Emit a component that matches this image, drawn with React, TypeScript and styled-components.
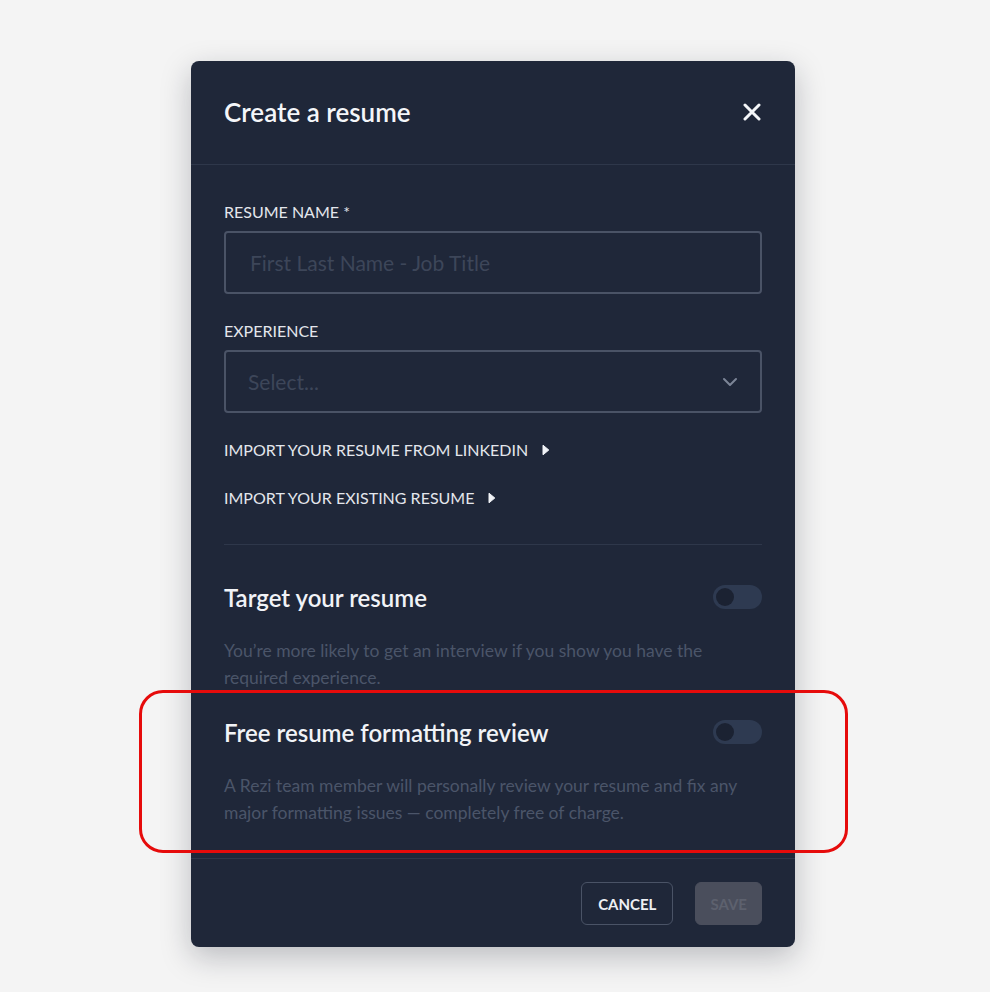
import React from 'react';
import styled, { createGlobalStyle } from 'styled-components';

const GlobalStyle = createGlobalStyle`
  html, body {
    margin: 0;
    padding: 0;
    background: #f4f4f4;
    font-family: Lato, "Open Sans", "Liberation Sans", sans-serif;
  }
  * {
    box-sizing: border-box;
  }
`;

const Page = styled.main`
  min-height: 992px;
  display: flex;
  justify-content: center;
  align-items: flex-start;
  padding: 61px 4px 0 0;
`;

const Modal = styled.div`
  position: relative;
  width: 604px;
  background: #1f2739;
  border-radius: 8px;
  box-shadow: 0 10px 30px rgba(20, 25, 40, 0.25);
  color: #e6e9ef;
`;

const Header = styled.header`
  height: 104px;
  display: flex;
  align-items: center;
  justify-content: space-between;
  padding: 0 33px 1px;
  border-bottom: 1px solid #2e374a;
`;

const Title = styled.h1`
  margin: 0;
  font-size: 26px;
  font-weight: 600;
  color: #f4f6f9;
`;

const CloseButton = styled.button`
  background: none;
  border: none;
  padding: 0;
  width: 20px;
  height: 20px;
  display: flex;
  align-items: center;
  justify-content: center;
  cursor: pointer;
`;

const Body = styled.div`
  padding: 37px 33px 0;
  display: flex;
  flex-direction: column;
`;

const Label = styled.label`
  display: block;
  font-size: 16px;
  line-height: 20px;
  text-transform: uppercase;
  color: #e3e6ec;
  margin-bottom: 9px;
`;

const Field = styled.div<{ $gap?: number }>`
  margin-bottom: ${(p) => p.$gap ?? 27}px;
`;

const InputBox = styled.div`
  position: relative;
  height: 63px;
  border: 2px solid #4a5366;
  border-radius: 4px;
  display: flex;
  align-items: center;
  padding: 0 22px;
`;

const TextInput = styled.input`
  width: 100%;
  background: transparent;
  border: none;
  outline: none;
  font-family: inherit;
  font-size: 21px;
  color: #e6e9ef;
  &::placeholder {
    color: #3d4659;
  }
`;

const SelectValue = styled.span`
  flex: 1;
  font-size: 21px;
  color: #3d4659;
`;

const LinkRow = styled.a<{ $last?: boolean }>`
  display: flex;
  align-items: center;
  gap: 14px;
  font-size: 16px;
  line-height: 20px;
  color: #e3e6ec;
  text-transform: uppercase;
  text-decoration: none;
  cursor: pointer;
  margin-bottom: ${(p) => (p.$last ? 36 : 28)}px;
`;

const Divider = styled.hr`
  margin: 0 0 38px;
  border: none;
  border-top: 1px solid #2e374a;
`;

const Section = styled.section`
  margin-bottom: 27px;
`;

const SectionHead = styled.div`
  display: flex;
  align-items: center;
  justify-content: space-between;
  height: 28px;
  margin-bottom: 26px;
`;

const SectionTitle = styled.h2`
  margin: 0;
  font-size: 24px;
  font-weight: 600;
  color: #f1f3f7;
`;

const Description = styled.p`
  margin: 0;
  font-size: 17.5px;
  line-height: 27px;
  color: #4b5569;
  max-width: 525px;
`;

const Toggle = styled.button`
  position: relative;
  width: 49px;
  height: 24px;
  border-radius: 12px;
  border: none;
  padding: 0;
  background: #2e3a51;
  cursor: pointer;
  &::after {
    content: '';
    position: absolute;
    left: 3px;
    top: 3px;
    width: 18px;
    height: 18px;
    border-radius: 50%;
    background: #1b2232;
  }
`;

const Footer = styled.footer`
  margin-top: 5px;
  border-top: 1px solid #2e374a;
  padding: 23px 33px 22px;
  display: flex;
  justify-content: flex-end;
  gap: 22px;
`;

const Button = styled.button<{ $disabled?: boolean }>`
  height: 43px;
  padding: 0 ${(p) => (p.$disabled ? 14 : 16)}px;
  border-radius: 6px;
  font-family: inherit;
  font-size: 15px;
  font-weight: 700;
  text-transform: uppercase;
  border: 1.5px solid ${(p) => (p.$disabled ? '#4a4e5c' : '#4a5366')};
  background: ${(p) => (p.$disabled ? '#4a4e5c' : 'transparent')};
  color: ${(p) => (p.$disabled ? '#5d616e' : '#eef0f4')};
  cursor: ${(p) => (p.$disabled ? 'default' : 'pointer')};
`;

const Highlight = styled.div`
  position: absolute;
  left: -52px;
  top: 629px;
  width: 709px;
  height: 163px;
  border: 3px solid #e60b0b;
  border-radius: 24px;
  pointer-events: none;
`;

const PlayIcon = () => (
  <svg width="8" height="12" viewBox="0 0 8 12">
    <path d="M1 1.2 L6.8 6 L1 10.8 Z" fill="#f1f3f7" stroke="#f1f3f7" strokeWidth="1" strokeLinejoin="round" />
  </svg>
);

const App: React.FC = () => {
  return (
    <>
      <GlobalStyle />
      <Page>
        <Modal>
          <Header>
            <Title>Create a resume</Title>
            <CloseButton aria-label="Close">
              <svg width="18" height="18" viewBox="0 0 18 18">
                <path d="M2 2 L16 16 M16 2 L2 16" stroke="#f4f6f9" strokeWidth="3" strokeLinecap="round" />
              </svg>
            </CloseButton>
          </Header>
          <Body>
            <Field>
              <Label>Resume Name *</Label>
              <InputBox>
                <TextInput placeholder="First Last Name - Job Title" />
              </InputBox>
            </Field>
            <Field>
              <Label>Experience</Label>
              <InputBox>
                <SelectValue>Select...</SelectValue>
                <svg width="16" height="10" viewBox="0 0 16 10">
                  <path d="M2 2 L8 8 L14 2" fill="none" stroke="#7c8597" strokeWidth="2" strokeLinecap="round" strokeLinejoin="round" />
                </svg>
              </InputBox>
            </Field>
            <LinkRow>
              Import your resume from LinkedIn <PlayIcon />
            </LinkRow>
            <LinkRow $last>
              Import your existing resume <PlayIcon />
            </LinkRow>
            <Divider />
            <Section>
              <SectionHead>
                <SectionTitle>Target your resume</SectionTitle>
                <Toggle aria-label="Target your resume" />
              </SectionHead>
              <Description>
                You’re more likely to get an interview if you show you have the required experience.
              </Description>
            </Section>
            <Section>
              <SectionHead>
                <SectionTitle>Free resume formatting review</SectionTitle>
                <Toggle aria-label="Free resume formatting review" />
              </SectionHead>
              <Description>
                A Rezi team member will personally review your resume and fix any major formatting issues — completely free of charge.
              </Description>
            </Section>
          </Body>
          <Footer>
            <Button>Cancel</Button>
            <Button $disabled>Save</Button>
          </Footer>
          <Highlight />
        </Modal>
      </Page>
    </>
  );
};

export default App;
